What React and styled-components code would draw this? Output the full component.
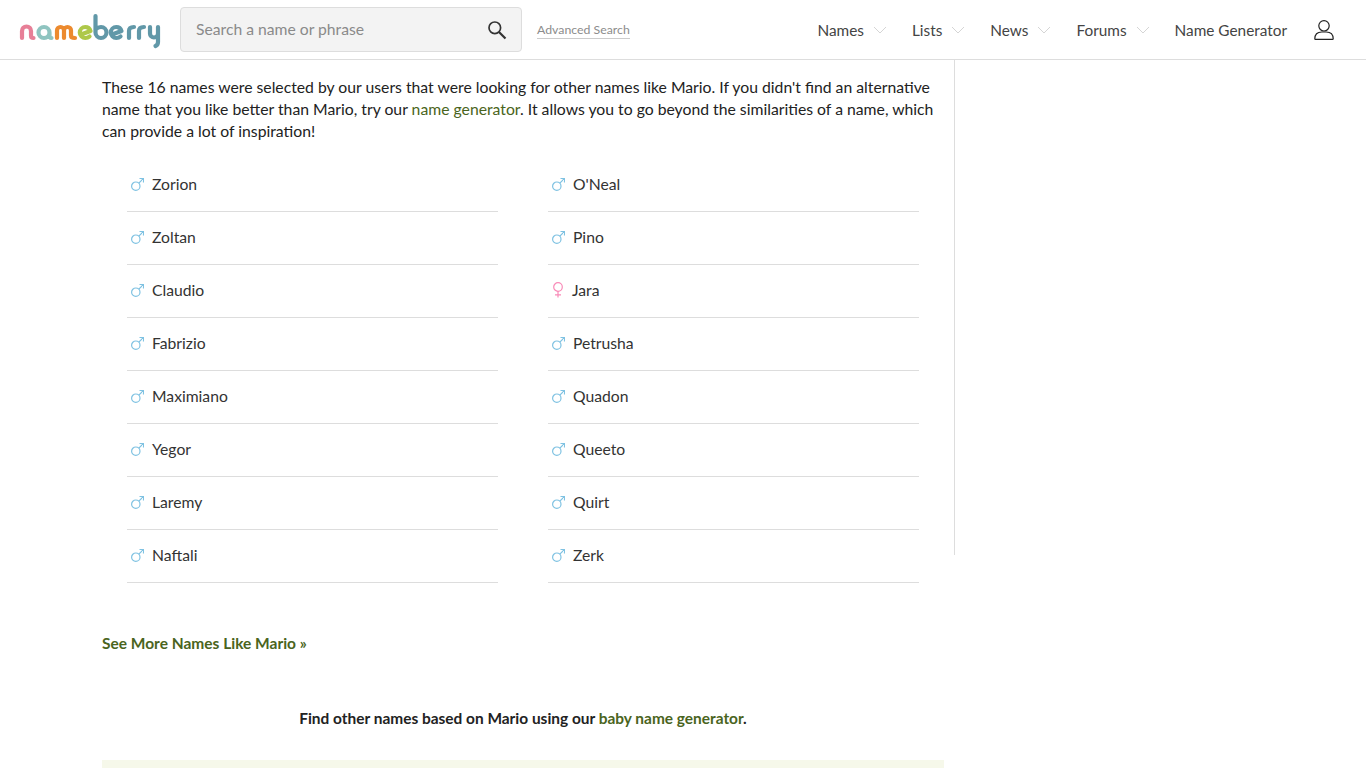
import React from "react"
import styled, { createGlobalStyle } from "styled-components"

const leftNames = ["Zorion", "Zoltan", "Claudio", "Fabrizio", "Maximiano", "Yegor", "Laremy", "Naftali"]
const rightNames = ["O'Neal", "Pino", "Jara", "Petrusha", "Quadon", "Queeto", "Quirt", "Zerk"]
const femaleNames = ["Jara"]
const menu = [
  { label: "Names", drop: true },
  { label: "Lists", drop: true },
  { label: "News", drop: true },
  { label: "Forums", drop: true },
  { label: "Name Generator" },
]

const GlobalStyle = createGlobalStyle`
  html, body { margin: 0; padding: 0; background: #fff; }
  body {
    font-family: Lato, "Liberation Sans", sans-serif;
    font-size: 15.7px;
    color: #222;
    height: 768px;
    overflow: hidden;
  }
  a { text-decoration: none; }
`

// Header
const Header = styled.header`
  height: 59px;
  border-bottom: 1px solid #ddd;
  display: flex;
  align-items: center;
  padding: 0 32px 0 18px;
`
const LogoLink = styled.a`
  display: flex;
  width: 162px;
  flex: none;
`
const SearchBox = styled.div`
  width: 342px;
  height: 45px;
  box-sizing: border-box;
  border: 1px solid #ddd;
  border-radius: 4px;
  background: #f3f3f3;
  display: flex;
  align-items: center;
  justify-content: space-between;
  padding: 0 14px 2px 15px;
  color: #8a8a8a;
  font-size: 15.7px;
`
const SearchGlass = styled.span`
  display: flex;
  margin-top: 2px;
`
const AdvancedLink = styled.a`
  margin-left: 15px;
  color: #8c8c8c;
  font-size: 12.3px;
  line-height: 17px;
  border-bottom: 1px solid #ccc;
`
const Nav = styled.nav`
  margin-left: auto;
  display: flex;
  align-items: center;
`
const NavItem = styled.a`
  display: flex;
  align-items: center;
  gap: 9px;
  margin-right: ${(props) => (props.$drop ? "25px" : "27px")};
  color: #444;
  font-size: 15.35px;
`

// Page
const Main = styled.main`
  width: 853px;
  height: 495px;
  margin-left: 102px;
  box-sizing: border-box;
  border-right: 1px solid #ddd;
  padding: 16px 10px 0 0;
`
const Intro = styled.p`
  margin: 0;
  font-size: 15.75px;
  line-height: 22px;
  color: #222;
`
const GreenLink = styled.a`
  color: #4a6420;
`
const NameGrid = styled.div`
  display: grid;
  grid-template-columns: 371px 371px;
  column-gap: 50px;
  margin: 17px 0 0 25px;
`
const NameRow = styled.div`
  height: 53px;
  box-sizing: border-box;
  border-bottom: 1px solid #ddd;
  display: flex;
  align-items: center;
  gap: 8px;
  padding: 0 0 2px 4px;
  color: #333;
`
const Below = styled.div`
  margin: 0 0 0 102px;
  width: 842px;
`
const MoreLink = styled.a`
  display: block;
  margin-top: 77px;
  color: #4a6420;
  font-weight: 700;
  font-size: 15.5px;
  line-height: 22px;
`
const FindLine = styled.p`
  margin: 53px 0 0;
  text-align: center;
  font-weight: 700;
  font-size: 15.45px;
  line-height: 22px;
  color: #222;
`
const GeneratorBand = styled.div`
  margin-top: 31px;
  height: 40px;
  background: #f6f8ea;
`

// viewBox is in page pixels, so the letters line up with the reference
function Logo() {
  return (
    <svg width="144" height="38" viewBox="18 10 144 38" fill="none" strokeWidth="4.2" strokeLinecap="round" strokeLinejoin="round" role="img" aria-label="nameberry">
      <path stroke="#e77f97" d="M22 37V30a4.500 4.500 0 0 1 9 0V34.500q0 2.500 2.500 2.500" />
      <path stroke="#8fc4c0" d="M49.500 31.500a5.500 5.500 0 1 0-11 0a5.500 5.500 0 1 0 11 0V34.500q0 2.500 2 2.500" />
      <path stroke="#ec8a2e" d="M57 37V29.500a3.500 3.500 0 0 1 7 0V37M64 29.500a3.500 3.500 0 0 1 7 0V34.500q0 2.500 4 2.500" />
      <path stroke="#aec84a" d="M81 33.500l9.500-3.500q-1.200-4-5.200-4a5.500 5.500 0 0 0 0 11q2.500 0 4.200-1.500" />
      <path stroke="#6198a8" d="M95.500 15V31.500a5.500 5.500 0 1 0 5.500-5.500q-3 0-5.500 2.500" />
      <path stroke="#6198a8" d="M112 33.500l9.500-3.500q-1.200-4-5.200-4a5.500 5.500 0 0 0 0 11q2.500 0 4.200-1.500" />
      <path stroke="#6198a8" d="M129 37V30q0-4 5-4" />
      <path stroke="#6198a8" d="M139 37V30q0-4 5-4" />
      <path stroke="#6198a8" d="M150 26v6.500a4 4 0 0 0 8 0V26M158 26V41q0 3-2.500 4" />
    </svg>
  )
}

function SearchIcon() {
  return (
    <svg width="20" height="20" viewBox="0 0 20 20" fill="none" stroke="#333" strokeWidth="1.700">
      <circle cx="7.800" cy="7.800" r="5.800" />
      <path d="M12 12l6.500 6.500" strokeWidth="2.200" />
    </svg>
  )
}

function Chevron() {
  return (
    <svg width="14" height="8" viewBox="0 0 14 8" fill="none" stroke="#d5d5d5" strokeWidth="1">
      <path d="M1 1l6 6 6-6" />
    </svg>
  )
}

function UserIcon() {
  return (
    <svg width="20" height="20" viewBox="0 0 20 20" fill="none" stroke="#222" strokeWidth="1.200">
      <circle cx="10" cy="5.800" r="5.200" />
      <path d="M.8 18.800q0-6.800 7-6.800h4.400q7 0 7 6.800q0 .6-.8.6H1.600q-.8 0-.8-.6z" strokeLinejoin="round" />
    </svg>
  )
}

function GenderIcon({ female }) {
  if (female) {
    return (
      <svg width="12" height="16" viewBox="0.500 0 12 16" fill="none" stroke="#f98bb8" strokeWidth="1.200">
        <circle cx="6.500" cy="5" r="4.300" />
        <path d="M6.500 9.300V15.500M3.500 12.800h6" />
      </svg>
    )
  }
  return (
    <svg width="13" height="13" viewBox="0 0 13 13" fill="none" stroke="#7fc2e2" strokeWidth="1.200">
      <circle cx="4.800" cy="8.200" r="4.200" />
      <path d="M7.800 5.200L12.500 .5M8.500 .5h4v4" />
    </svg>
  )
}

function Name({ name }) {
  return (
    <NameRow>
      <GenderIcon female={femaleNames.includes(name)} />
      {name}
    </NameRow>
  )
}

export default function App() {
  return (
    <>
      <GlobalStyle />
      <Header>
        <LogoLink href="#"><Logo /></LogoLink>
        <SearchBox>
          Search a name or phrase
          <SearchGlass><SearchIcon /></SearchGlass>
        </SearchBox>
        <AdvancedLink href="#">Advanced Search</AdvancedLink>
        <Nav>
          {menu.map((item) => (
            <NavItem href="#" key={item.label} $drop={item.drop}>
              {item.label}
              {item.drop && <Chevron />}
            </NavItem>
          ))}
          <UserIcon />
        </Nav>
      </Header>
      <Main>
        <Intro>
          These 16 names were selected by our users that were looking for other names like Mario. If you didn't find an alternative<br />
          name that you like better than Mario, try our <GreenLink href="#">name generator</GreenLink>. It allows you to go beyond the similarities of a name, which<br />
          can provide a lot of inspiration!
        </Intro>
        <NameGrid>
          {leftNames.map((name, i) => (
            <React.Fragment key={name}>
              <Name name={name} />
              <Name name={rightNames[i]} />
            </React.Fragment>
          ))}
        </NameGrid>
      </Main>
      <Below>
        <MoreLink href="#">See More Names Like Mario »</MoreLink>
        <FindLine>
          Find other names based on Mario using our <GreenLink href="#">baby name generator</GreenLink>.
        </FindLine>
        <GeneratorBand />
      </Below>
    </>
  )
}
